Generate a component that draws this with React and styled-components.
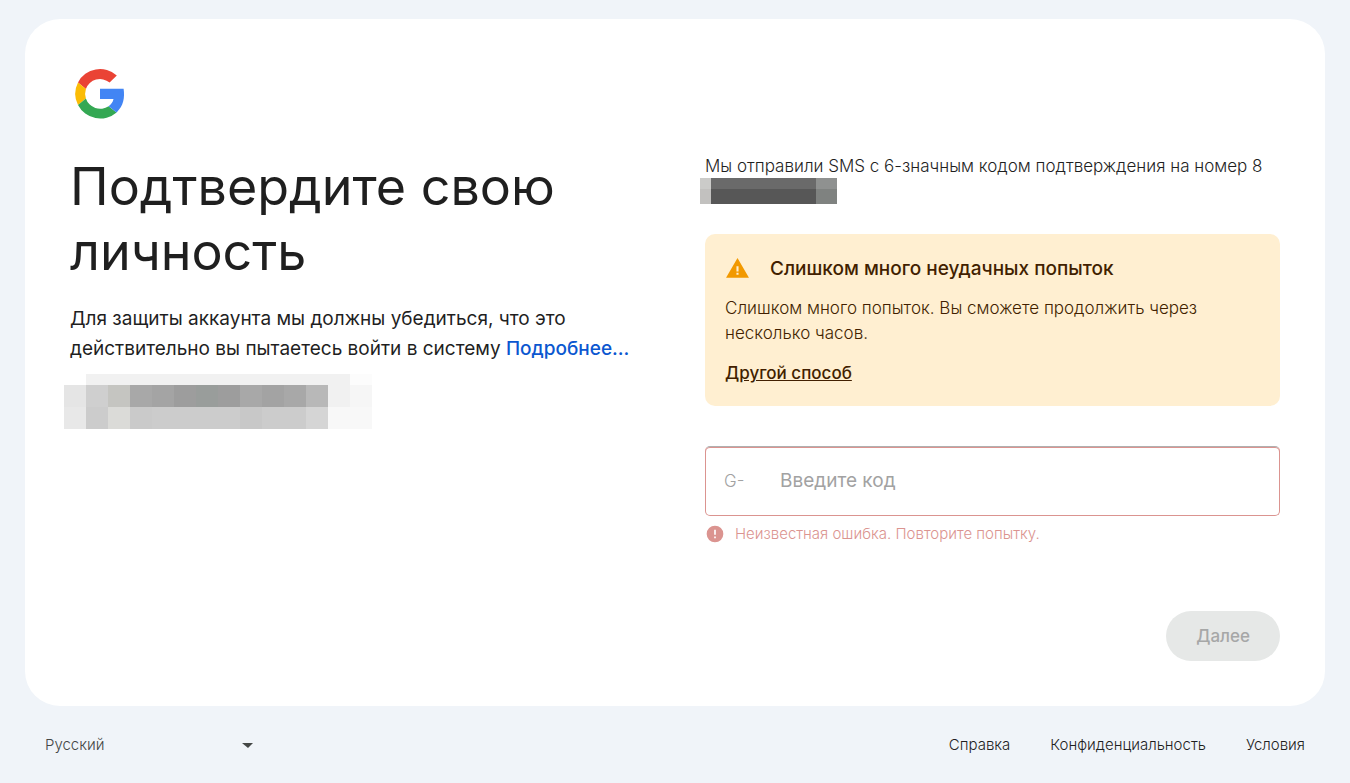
import React from "react";
import styled, { createGlobalStyle } from "styled-components";

const GlobalStyle = createGlobalStyle`
  *, *::before, *::after { box-sizing: border-box; }
  body {
    margin: 0;
    background: #f0f4f9;
    color: #1f1f1f;
    font-family: Inter, Roboto, "Liberation Sans", sans-serif;
    font-size: 17px;
    font-weight: 350;
    line-height: 25px;
  }
  button, input, select { font: inherit; }
`;

const Page = styled.div`
  min-height: 100vh;
  display: flex;
  flex-direction: column;
  padding: 19px 25px 0;
`;

const Card = styled.main`
  background: #fff;
  border-radius: 35px;
  padding: 45px;
`;

const Logo = styled.svg`
  display: block;
  width: 60px;
  height: 60px;
`;

const Columns = styled.div`
  display: grid;
  grid-template-columns: 1fr 1fr;
  gap: 60px;
  padding-top: 30px;
`;

const Column = styled.section`
  min-width: 0;
`;

const Title = styled.h1`
  margin: 0;
  font-size: 52px;
  font-weight: 400;
  line-height: 65px;
`;

const Lead = styled.p`
  margin: 20px 0 0;
  font-size: 19px;
  font-weight: 400;
  line-height: 30px;
`;

const LearnMore = styled.a`
  color: #0b57d0;
  font-weight: 500;
  text-decoration: none;
`;

const Redaction = styled.svg`
  display: block;
  margin: ${(p) => p.$margin};
`;

const Sent = styled.p`
  margin: 0;
`;

const Alert = styled.div`
  margin-top: 30px;
  padding: 20px;
  border-radius: 10px;
  background: #ffefd1;
  color: #421f00;
`;

const AlertHead = styled.div`
  display: flex;
  align-items: center;
  gap: 20px;
  height: 30px;
  svg { display: block; }
`;

const AlertTitle = styled.h2`
  margin: 0;
  font-size: 19px;
  font-weight: 500;
  line-height: 30px;
`;

const AlertText = styled.p`
  margin: 12px 0 15px;
`;

const OtherWay = styled.a`
  display: block;
  width: fit-content;
  color: inherit;
  font-weight: 500;
`;

const Field = styled.label`
  display: flex;
  align-items: center;
  height: 70px;
  margin-top: 40px;
  padding: 0 18px;
  border: 1px solid #db9490;
  border-top-color: #b0b0b0;
  border-radius: 5px;
  box-shadow: inset 0 1px #db9490;
  color: #a2a2a2;
`;

const Prefix = styled.span`
  width: 56px;
`;

const CodeInput = styled.input`
  flex: 1;
  min-width: 0;
  padding: 0;
  border: 0;
  outline: 0;
  background: transparent;
  font-size: 19px;
  font-weight: 400;
  line-height: 30px;
  &::placeholder { color: #a2a2a2; opacity: 1; }
`;

const ErrorLine = styled.p`
  display: flex;
  align-items: center;
  gap: 10px;
  margin: 5px 0 0;
  color: #db9490;
  font-size: 15px;
  svg { display: block; }
`;

const Actions = styled.div`
  display: flex;
  justify-content: flex-end;
  margin-top: 65px;
`;

const NextButton = styled.button`
  height: 50px;
  padding: 0 30px;
  border: 0;
  border-radius: 25px;
  background: #e6e8e7;
  color: #a6a7a7;
  font-weight: 500;
`;

const Footer = styled.footer`
  display: flex;
  align-items: center;
  justify-content: space-between;
  padding: 26px 20px;
  font-size: 15px;
`;

const Language = styled.div`
  display: grid;
  align-items: center;
  width: 210px;
  color: #444746;
  > * { grid-area: 1 / 1; }
  > svg { justify-self: end; pointer-events: none; }
`;

const LanguageSelect = styled.select`
  appearance: none;
  width: 100%;
  padding: 0;
  border: 0;
  background: transparent;
  color: inherit;
`;

const Links = styled.nav`
  display: flex;
  gap: 40px;
`;

const FooterLink = styled.a`
  color: #1f1f1f;
  text-decoration: none;
`;

const accountTop = [
  "#e5e5e5", "#cfcfcf", "#c5c5c1", "#a8a8a8", "#a4a4a4", "#9d9d9d", "#999d9b",
  "#9d9d9d", "#a8a8a8", "#a3a3a3", "#a8a8a8", "#b8b8b8", "#f1f1f1", "#f6f6f6",
];
const accountBottom = [
  "#e8e8e8", "#cccccc", "#dbdbd8", "#cacaca", "#cccccc", "#cccccc", "#cccccc",
  "#cccccc", "#c8c8c8", "#cccccc", "#cccccc", "#d5d5d5", "#f8f8f8", "#f8f8f8",
];

function HiddenAccount() {
  return (
    <Redaction $margin="10px 0 0 -6px" width="308" height="55" shapeRendering="crispEdges" aria-hidden="true">
      <rect x="22" width="264" height="11" fill="#f1f1f1" />
      <rect x="286" width="22" height="11" fill="#fcfcfc" />
      {accountTop.map((c, i) => <rect key={i} x={i * 22} y="11" width="22" height="22" fill={c} />)}
      {accountBottom.map((c, i) => <rect key={i} x={i * 22} y="33" width="22" height="22" fill={c} />)}
    </Redaction>
  );
}

function HiddenNumber() {
  return (
    <Redaction $margin="-1px 0 0 -5px" width="137" height="26" shapeRendering="crispEdges" aria-hidden="true">
      <rect width="11" height="11" fill="#cbcbc9" />
      <rect x="11" width="105" height="11" fill="#6a6a6a" />
      <rect x="116" width="21" height="11" fill="#8f9190" />
      <rect y="11" width="11" height="15" fill="#c2c1bf" />
      <rect x="11" y="11" width="105" height="15" fill="#575757" />
      <rect x="116" y="11" width="21" height="15" fill="#7f8280" />
    </Redaction>
  );
}

export default function App() {
  return (
    <Page>
      <GlobalStyle />
      <Card>
        <Logo viewBox="0 0 60 60" role="img" aria-label="Google">
          <path fill="#EA4335" d="M8 18.4A25 25 0 0 1 46.8 11.4L39.6 18.5A15 15 0 0 0 15.9 25.1Z" />
          <path fill="#FBBC05" d="M8 18.4A25 25 0 0 0 8 41L15.9 34.5A15 15 0 0 1 15.9 25.1Z" />
          <path fill="#34A853" d="M8 41A25 25 0 0 0 46.6 48.4L38.6 42.2A15 15 0 0 1 15.9 34.5Z" />
          <path fill="#4285F4" d="M30 24.8H53.6C54.9 33.8 53.5 42 46.6 48.4L38.6 42.2C41.2 40.5 42.9 38 43.5 35H30Z" />
        </Logo>
        <Columns>
          <Column>
            <Title>Подтвердите свою личность</Title>
            <Lead>
              Для защиты аккаунта мы должны убедиться, что это действительно вы пытаетесь войти в систему{" "}
              <LearnMore href="#more">Подробнее…</LearnMore>
            </Lead>
            <HiddenAccount />
          </Column>
          <Column>
            <Sent>Мы отправили SMS с 6-значным кодом подтверждения на номер 8</Sent>
            <HiddenNumber />
            <Alert role="alert">
              <AlertHead>
                <svg width="25" height="25" viewBox="0 1 24 24" aria-hidden="true">
                  <path fill="#f29900" fillRule="evenodd" d="M1 21 12 2l11 19H1Zm10-11v5h2v-5h-2Zm0 6v2h2v-2h-2Z" />
                </svg>
                <AlertTitle>Слишком много неудачных попыток</AlertTitle>
              </AlertHead>
              <AlertText>Слишком много попыток. Вы сможете продолжить через несколько часов.</AlertText>
              <OtherWay href="#other">Другой способ</OtherWay>
            </Alert>
            <Field htmlFor="code">
              <Prefix>G-</Prefix>
              <CodeInput id="code" placeholder="Введите код" aria-invalid="true" aria-describedby="code-error" />
            </Field>
            <ErrorLine id="code-error">
              <svg width="20" height="20" viewBox="0 0 24 24" aria-hidden="true">
                <path fill="#db9490" fillRule="evenodd" d="M12 2a10 10 0 1 0 0 20 10 10 0 0 0 0-20Zm-1 5v6h2V7h-2Zm0 8v2h2v-2h-2Z" />
              </svg>
              Неизвестная ошибка. Повторите попытку.
            </ErrorLine>
            <Actions>
              <NextButton type="button" disabled>Далее</NextButton>
            </Actions>
          </Column>
        </Columns>
      </Card>
      <Footer>
        <Language>
          <LanguageSelect aria-label="Язык" defaultValue="ru">
            <option value="ru">Русский</option>
          </LanguageSelect>
          <svg width="15" height="10" viewBox="0 0 15 10" aria-hidden="true">
            <path fill="#444746" d="M2 3h11L8 8z" />
          </svg>
        </Language>
        <Links>
          <FooterLink href="#help">Справка</FooterLink>
          <FooterLink href="#privacy">Конфиденциальность</FooterLink>
          <FooterLink href="#terms">Условия</FooterLink>
        </Links>
      </Footer>
    </Page>
  );
}
